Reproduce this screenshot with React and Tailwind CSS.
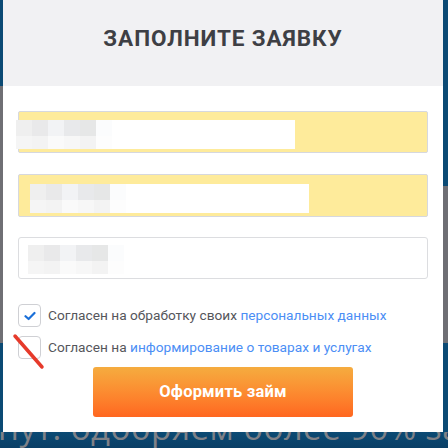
import React from 'react';

// pixelated placeholder blocks (censored input text)
const TOP_ROW = ['bg-[#efefef]', 'bg-[#e9e9ea]', 'bg-[#f2f3f5]', 'bg-[#e8e9eb]', 'bg-[#e6e7e7]', 'bg-[#fbfcfd]'];
const BOTTOM_ROW = ['bg-[#f5f5f5]', 'bg-[#f3f3f3]', 'bg-[#fafafa]', 'bg-[#f7f7f7]', 'bg-[#f3f3f3]', 'bg-[#fdfdfd]'];

const Mosaic = () => (
    <div className="flex flex-col">
        <div className="flex">
            {TOP_ROW.map((c, i) => (
                <div key={i} className={`w-[16px] h-[16px] ${c}`} />
            ))}
        </div>
        <div className="flex">
            {BOTTOM_ROW.map((c, i) => (
                <div key={i} className={`w-[16px] h-[13px] ${c}`} />
            ))}
        </div>
    </div>
);

const Check = () => (
    <svg width="12" height="10" viewBox="0 0 12 10" fill="none">
        <path d="M1.5 5.2 L4.6 8 L10.5 2" stroke="#1a6fd8" strokeWidth="2.2" strokeLinecap="round" strokeLinejoin="round" />
    </svg>
);

export default function App() {
    return (
        <div className="w-[448px] h-[448px] overflow-hidden bg-[#0a4570] flex flex-col font-['Roboto',sans-serif]">
            <div className="flex h-[432px] shrink-0">
                {/* left page strip */}
                <div className="w-[3px] flex flex-col">
                    <div className="h-[86px] bg-[#0b4a74]" />
                    <div className="h-[257px] bg-[#6f6f74]" />
                    <div className="flex-1 bg-[#0b4a74]" />
                </div>

                {/* MODAL */}
                <div className="w-[440px] bg-white flex flex-col relative z-10">
                    <div className="h-[86px] bg-[#f1f1f3] flex items-center justify-center pb-[9px]">
                        <h1 className="text-[22.5px] font-bold text-[#3e3f44] tracking-[0.9px]">ЗАПОЛНИТЕ ЗАЯВКУ</h1>
                    </div>

                    <div className="px-[15px] pt-[25px] flex flex-col">
                        <div className="relative h-[42px] bg-[#feeb9b] border border-[#d6d8de] rounded-[2px]">
                            <div className="absolute left-[-3px] top-[8px] w-[279px] h-[29px] bg-white">
                                <Mosaic />
                            </div>
                        </div>

                        <div className="relative h-[43px] mt-[21px] bg-[#feeb9b] border border-[#d6d8de] rounded-[2px]">
                            <div className="absolute left-[11px] top-[9px] w-[279px] h-[29px] bg-white">
                                <Mosaic />
                            </div>
                        </div>

                        <div className="relative h-[42px] mt-[20px] bg-white border border-[#dcdde0] rounded-[3px]">
                            <div className="absolute left-[9px] top-[7px]">
                                <Mosaic />
                            </div>
                        </div>

                        <div className="flex items-center gap-[7px] mt-[25px]">
                            <div className="w-[23px] h-[23px] border border-[#cfd0d4] rounded-[4px] flex items-center justify-center">
                                <Check />
                            </div>
                            <span className="text-[13.7px] text-[#55565b]">
                                Согласен на обработку своих <span className="text-[#4b8ef5]">персональных данных</span>
                            </span>
                        </div>

                        <div className="relative flex items-center gap-[7px] mt-[9px]">
                            <div className="w-[23px] h-[23px] border border-[#cfd0d4] rounded-[4px]" />
                            <span className="text-[13.7px] text-[#55565b]">
                                Согласен на <span className="text-[#4b8ef5]">информирование о товарах и услугах</span>
                            </span>
                            {/* red annotation slash */}
                            <svg className="absolute left-[-6px] top-[-3px]" width="34" height="38" viewBox="0 0 34 38">
                                <line x1="3" y1="3" x2="30" y2="34" stroke="#e63a2b" strokeWidth="3.5" strokeLinecap="round" />
                            </svg>
                        </div>

                        <button className="self-center mt-[8px] w-[260px] h-[50px] rounded-[3px] bg-gradient-to-b from-[#f5ac3f] to-[#ff6620] text-white text-[16.5px] font-bold tracking-[0.2px]">
                            Оформить займ
                        </button>
                    </div>
                </div>

                {/* right page strip */}
                <div className="w-[5px] flex flex-col">
                    <div className="h-[186px] bg-[#0b4a74]" />
                    <div className="h-[157px] bg-[#6f6f74]" />
                    <div className="flex-1 bg-[#0b4a74]" />
                </div>
            </div>

            {/* page text peeking below the modal */}
            <div className="flex-1 overflow-hidden bg-gradient-to-b from-[#0b4a74] to-[#0a3f66]">
                <div className="mt-[-24px] ml-[-2px] whitespace-nowrap text-[33px] leading-[40px] text-[#7f8187] tracking-[0.5px] font-['Open_Sans',sans-serif]">
                    нут. одобряем более 90% займов
                </div>
            </div>
        </div>
    );
}
